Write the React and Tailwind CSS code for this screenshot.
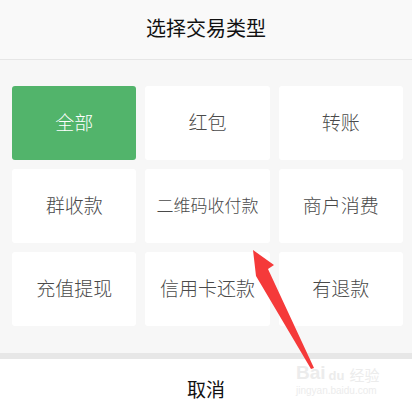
import React from "react";

const items = ["全部", "红包", "转账", "群收款", "二维码收付款", "商户消费", "充值提现", "信用卡还款", "有退款"];

export default function App() {
  return (
    <div
      className="relative w-[412px] h-[415px] overflow-hidden bg-white"
      style={{ fontFamily: '"Noto Sans CJK SC", "Noto Sans", sans-serif' }}
    >
      <div className="h-[60px] bg-[#f9f9f9] flex items-center justify-center pb-[4px] text-[20px] leading-none text-[#111] border-b border-[#e6e6e6]">
        选择交易类型
      </div>
      <div className="bg-[#f7f7f7] pl-[12px] pr-[9px] pt-[26px] pb-[27px] grid grid-cols-3 gap-x-[9px] gap-y-[9px]">
        {items.map((t, i) => (
          <div
            key={t}
            className={
              i === 0
                ? "h-[74px] rounded-[3px] bg-[#52b46b] text-white flex items-center justify-center pb-[4px] leading-none font-light text-[19px]"
                : "h-[74px] rounded-[3px] bg-white text-[#4a4a4a] flex items-center justify-center pb-[4px] leading-none font-light " +
                  (t.length > 5 ? "text-[17px]" : "text-[19px]")
            }
          >
            {t}
          </div>
        ))}
      </div>
      <div className="h-[6px] bg-[#e7e7e7]" />
      <div className="h-[58px] flex items-center justify-center text-[19px] leading-none text-[#111]">取消</div>

      <svg className="absolute left-0 top-0 pointer-events-none" width="412" height="415">
        <polygon
          points="253,250 274,265 268,269 314,368 311,369 256,276"
          fill="#f53a3a"
        />
      </svg>
      <div className="absolute left-[296px] top-[363px] pointer-events-none text-[#ececec] leading-none">
        <div className="flex items-end">
          <span className="text-[19px] font-bold" style={{ fontFamily: '"Liberation Sans", sans-serif' }}>Bai</span>
          <span className="text-[13px] font-bold ml-[3px]" style={{ fontFamily: '"Liberation Sans", sans-serif' }}>du</span>
          <span className="text-[15px] ml-[5px]">经验</span>
        </div>
        <div className="text-[10px] mt-[4px]" style={{ fontFamily: '"Liberation Sans", sans-serif' }}>jingyan.baidu.com</div>
      </div>
    </div>
  );
}
